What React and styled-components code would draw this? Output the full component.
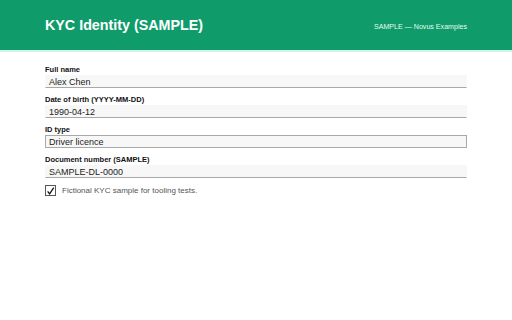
import React from 'react';
import styled, { createGlobalStyle } from 'styled-components';

const fields = [
	{ label: 'Full name', value: 'Alex Chen' },
	{ label: 'Date of birth (YYYY-MM-DD)', value: '1990-04-12' },
	{ label: 'ID type', value: 'Driver licence', select: true },
	{ label: 'Document number (SAMPLE)', value: 'SAMPLE-DL-0000' },
];

const App = () => (
	<>
		<GlobalStyle />
		<Header>
			<Title>KYC Identity (SAMPLE)</Title>
			<Tagline>SAMPLE — Novus Examples</Tagline>
		</Header>
		<Main>
			{fields.map(f => (
				<Field key={f.label}>
					<Label>{f.label}</Label>
					<Input boxed={f.select}>{f.value}</Input>
				</Field>
			))}
			<CheckRow>
				<Box>
					<svg width="10" height="10" viewBox="0 0 10 10">
						<path d="M1.8 5.4 L4 8.2 L8.6 1.2" fill="none" stroke="#111" strokeWidth="1.4" />
					</svg>
				</Box>
				<CheckText>Fictional KYC sample for tooling tests.</CheckText>
			</CheckRow>
		</Main>
	</>
);

const GlobalStyle = createGlobalStyle`
	body {
		margin: 0;
		background: #fff;
		font-family: "Liberation Sans", Arial, sans-serif;
	}
`;

const Header = styled.header`
	height: 50px;
	padding: 0 45px;
	background: #109b6b;
	border-bottom: 2px solid #cdf6e8;
	display: flex;
	align-items: center;
	justify-content: space-between;
	color: #fff;
`;

const Title = styled.h1`
	margin: 0;
	font-size: 14.3px;
	font-weight: bold;
`;

const Tagline = styled.span`
	font-size: 7.1px;
	color: #e3fbef;
	margin-top: 3px;
`;

const Main = styled.main`
	padding: 13px 45px 0;
	display: flex;
	flex-direction: column;
	gap: 7px;
`;

const Field = styled.div`
	display: flex;
	flex-direction: column;
`;

const Label = styled.label`
	font-size: 7.5px;
	font-weight: bold;
	line-height: 10px;
	color: #111;
`;

const Input = styled.div`
	height: 13px;
	box-sizing: border-box;
	padding: 0 3px;
	font-size: 9px;
	line-height: 12px;
	color: #222;
	background: #f7f7f7;
	border: 1px solid ${p => (p.boxed ? '#a8a8a8' : 'transparent')};
	border-bottom-color: #a8a8a8;
`;

const CheckRow = styled.div`
	display: flex;
	align-items: center;
	gap: 6px;
`;

const Box = styled.span`
	width: 11px;
	height: 11px;
	box-sizing: border-box;
	border: 1px solid #555;
	background: #fff;
	display: flex;
	align-items: center;
	justify-content: center;
`;

const CheckText = styled.span`
	font-size: 8px;
	color: #555;
`;

export default App;
